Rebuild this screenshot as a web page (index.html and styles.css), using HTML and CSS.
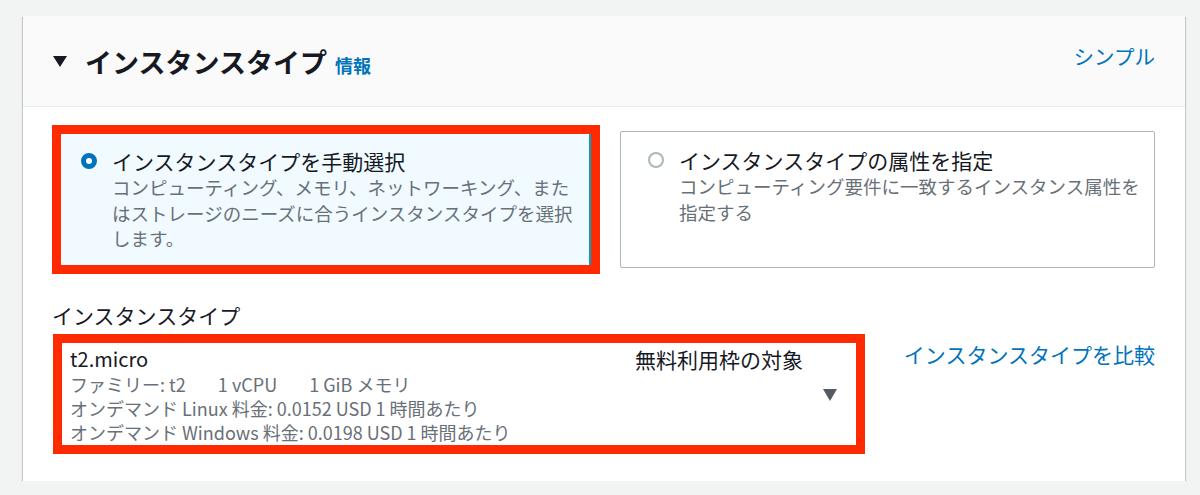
FILE: index.html
```html
<!DOCTYPE html>
<html lang="ja">

<head>
    <meta charset="UTF-8">
    <meta name="viewport" content="width=device-width, initial-scale=1.0">
    <title>インスタンスタイプ</title>
    <link rel="stylesheet" href="styles.css">
</head>

<body>

    <div class="card">
        <div class="card-header">
            <div class="header-title">
                <span class="caret-down"></span>
                <h2>インスタンスタイプ</h2>
                <a class="info-link" href="#">情報</a>
            </div>
            <a class="simple-link" href="#">シンプル</a>
        </div>

        <div class="card-body">
            <div class="tiles">
                <div class="highlight tile-wrap">
                    <div class="tile selected">
                        <span class="radio checked"></span>
                        <div class="tile-text">
                            <div class="tile-title">インスタンスタイプを手動選択</div>
                            <div class="tile-desc">コンピューティング、メモリ、ネットワーキング、またはストレージのニーズに合うインスタンスタイプを選択します。</div>
                        </div>
                    </div>
                </div>
                <div class="tile">
                    <span class="radio"></span>
                    <div class="tile-text">
                        <div class="tile-title">インスタンスタイプの属性を指定</div>
                        <div class="tile-desc">コンピューティング要件に一致するインスタンス属性を指定する</div>
                    </div>
                </div>
            </div>

            <div class="field-label">インスタンスタイプ</div>

            <div class="field-row">
                <div class="highlight select-wrap">
                    <div class="select">
                        <div class="select-main">
                            <div class="select-value">t2.micro</div>
                            <div class="select-meta">
                                <span>ファミリー: t2</span>
                                <span>1 vCPU</span>
                                <span>1 GiB メモリ</span>
                            </div>
                            <div class="select-meta">オンデマンド Linux 料金: 0.0152 USD 1 時間あたり</div>
                            <div class="select-meta">オンデマンド Windows 料金: 0.0198 USD 1 時間あたり</div>
                        </div>
                        <div class="select-side">
                            <div class="free-tier">無料利用枠の対象</div>
                            <span class="select-caret"></span>
                        </div>
                    </div>
                </div>
                <a class="compare-link" href="#">インスタンスタイプを比較</a>
            </div>
        </div>
    </div>

</body>

</html>
```

FILE: styles.css
```css
body {
    margin: 0;
    background: #f2f3f3;
    font-family: "Noto Sans CJK JP", "Noto Sans", sans-serif;
    color: #16191f;
    padding: 16px 0 0 23px;
}

a {
    color: #0073bb;
    text-decoration: none;
}

.card {
    width: 1162px;
    height: 465px;
    background: #fff;
    box-shadow: 0 1px 1px 0 rgba(0, 28, 36, 0.3), 1px 1px 1px 0 rgba(0, 28, 36, 0.15), -1px 1px 1px 0 rgba(0, 28, 36, 0.15);
}

.card-header {
    height: 90px;
    background: #fafafa;
    border-bottom: 1px solid #eaeded;
    display: flex;
    justify-content: space-between;
    align-items: center;
    padding: 0 30px;
}

.header-title {
    display: flex;
    align-items: center;
}

.caret-down {
    width: 0;
    height: 0;
    border-left: 7px solid transparent;
    border-right: 7px solid transparent;
    border-top: 11px solid #16191f;
    margin-right: 18px;
}

.header-title h2 {
    margin: 0;
    font-size: 27px;
    font-weight: bold;
    line-height: 36px;
    margin-top: 2px;
}

.info-link {
    font-size: 18px;
    font-weight: bold;
    margin-left: 8px;
    margin-top: 8px;
}

.simple-link {
    font-size: 20.5px;
    margin-bottom: 10px;
}

.card-body {
    padding: 18px 30px 0 29px;
}

.tiles {
    display: flex;
    align-items: center;
}

.highlight {
    border: 9px solid #ff2a00;
}

.tile-wrap {
    width: 530px;
    flex: none;
}

.tile {
    flex: 1;
    display: flex;
    align-items: flex-start;
    border: 1px solid #aab7b8;
    border-radius: 2px;
    padding: 14px 8px 0 27px;
    height: 121px;
    margin-left: 20px;
}

.tile.selected {
    margin-left: 0;
    border: none;
    border-right: 2px solid #00a1c9;
    border-radius: 0;
    background: #f1faff;
    padding: 13px 8px 0 20px;
    height: 118px;
}

.radio {
    flex: none;
    width: 12px;
    height: 12px;
    border: 2px solid #aab7b8;
    border-radius: 50%;
    margin-top: 6px;
    margin-right: 15px;
    background: #fff;
}

.radio.checked {
    width: 6px;
    height: 6px;
    border: 5px solid #0073bb;
}

.tile-title {
    font-size: 21px;
    line-height: 28px;
}

.tile-desc {
    font-size: 18.5px;
    line-height: 25.5px;
    color: #687078;
}

.field-label {
    font-size: 21px;
    line-height: 28px;
    margin-top: 27px;
    margin-bottom: 5px;
}

.field-row {
    display: flex;
    justify-content: space-between;
    align-items: flex-start;
}

.select-wrap {
    width: 794px;
    margin-left: 1px;
}

.select {
    display: flex;
    justify-content: space-between;
    padding: 3px 19px 0 8px;
    height: 99px;
}

.select-value {
    font-size: 20px;
    line-height: 26px;
}

.select-meta {
    font-size: 18px;
    line-height: 24px;
    color: #687078;
}

.select-meta span {
    margin-right: 28px;
}

.select-side {
    display: flex;
    flex-direction: column;
    align-items: flex-end;
}

.free-tier {
    font-size: 21px;
    line-height: 26px;
    margin-right: 34px;
}

.select-caret {
    width: 0;
    height: 0;
    border-left: 7px solid transparent;
    border-right: 7px solid transparent;
    border-top: 12px solid #545b64;
    margin-top: 17px;
}

.compare-link {
    font-size: 21px;
    line-height: 28px;
    margin-top: 6px;
}
```
